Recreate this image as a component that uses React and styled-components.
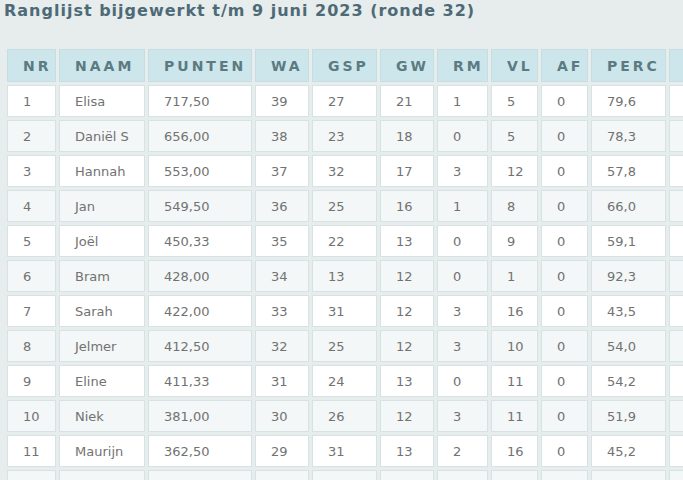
import React from "react";
import styled, { createGlobalStyle } from "styled-components";

const columns = [
  { key: "nr", label: "NR", width: 49 },
  { key: "naam", label: "NAAM", width: 86 },
  { key: "punten", label: "PUNTEN", width: 104 },
  { key: "wa", label: "WA", width: 54 },
  { key: "gsp", label: "GSP", width: 65 },
  { key: "gw", label: "GW", width: 54 },
  { key: "rm", label: "RM", width: 51 },
  { key: "vl", label: "VL", width: 47 },
  { key: "af", label: "AF", width: 47 },
  { key: "perc", label: "PERC", width: 75 },
  { key: "extra", label: "", width: 60 }
];

const rows = [
  [1, "Elisa", "717,50", 39, 27, 21, 1, 5, 0, "79,6"],
  [2, "Daniël S", "656,00", 38, 23, 18, 0, 5, 0, "78,3"],
  [3, "Hannah", "553,00", 37, 32, 17, 3, 12, 0, "57,8"],
  [4, "Jan", "549,50", 36, 25, 16, 1, 8, 0, "66,0"],
  [5, "Joël", "450,33", 35, 22, 13, 0, 9, 0, "59,1"],
  [6, "Bram", "428,00", 34, 13, 12, 0, 1, 0, "92,3"],
  [7, "Sarah", "422,00", 33, 31, 12, 3, 16, 0, "43,5"],
  [8, "Jelmer", "412,50", 32, 25, 12, 3, 10, 0, "54,0"],
  [9, "Eline", "411,33", 31, 24, 13, 0, 11, 0, "54,2"],
  [10, "Niek", "381,00", 30, 26, 12, 3, 11, 0, "51,9"],
  [11, "Maurijn", "362,50", 29, 31, 13, 2, 16, 0, "45,2"],
  ["", "", "", "", "", "", "", "", "", ""]
];

const App = () => {
  return (
    <Page>
      <GlobalStyle />
      <Title>Ranglijst bijgewerkt t/m 9 juni 2023 (ronde 32)</Title>
      <Table>
        <colgroup>
          {columns.map((col) => (
            <col key={col.key} style={{ width: col.width }} />
          ))}
        </colgroup>
        <thead>
          <tr>
            {columns.map((col) => (
              <HeadCell key={col.key}>{col.label}</HeadCell>
            ))}
          </tr>
        </thead>
        <tbody>
          {rows.map((row, i) => (
            <Row key={i} $even={i % 2 === 1}>
              {row.map((value, j) => (
                <Cell key={j}>{value}</Cell>
              ))}
              <Cell />
            </Row>
          ))}
        </tbody>
      </Table>
    </Page>
  );
};

/**
 *
 * Styled Components
 *
 */
const GlobalStyle = createGlobalStyle`
  html, body {
    margin: 0;
    padding: 0;
    background: #e7ecec;
    overflow: hidden;
  }
`;

const Page = styled.div`
  padding: 0 0 0 4px;
  width: 800px;
  font-family: "DejaVu Sans", Verdana, sans-serif;
`;

const Title = styled.h2`
  margin: 0;
  height: 46px;
  padding-top: 1px;
  box-sizing: border-box;
  font-size: 16px;
  line-height: 20px;
  letter-spacing: 1px;
  font-weight: bold;
  color: #4d6a76;
`;

const Table = styled.table`
  table-layout: fixed;
  border-collapse: separate;
  border-spacing: 3px;
  width: 676px;
  margin: 0;
`;

const HeadCell = styled.th`
  box-sizing: border-box;
  height: 33px;
  padding: 0 0 0 15px;
  text-align: left;
  vertical-align: middle;
  background: #cde6eb;
  border: 1px solid #c6dde1;
  color: #5b7a82;
  font-size: 14px;
  font-weight: bold;
  letter-spacing: 3px;
  white-space: nowrap;
  overflow: hidden;
`;

const Row = styled.tr`
  td {
    background: ${(p) => (p.$even ? "#f3f7f7" : "#ffffff")};
  }
`;

const Cell = styled.td`
  box-sizing: border-box;
  height: 32px;
  padding: 0 0 0 15px;
  text-align: left;
  vertical-align: middle;
  border: 1px solid #d7e2e2;
  color: #727272;
  font-size: 13px;
  white-space: nowrap;
  overflow: hidden;
`;

export default App;
